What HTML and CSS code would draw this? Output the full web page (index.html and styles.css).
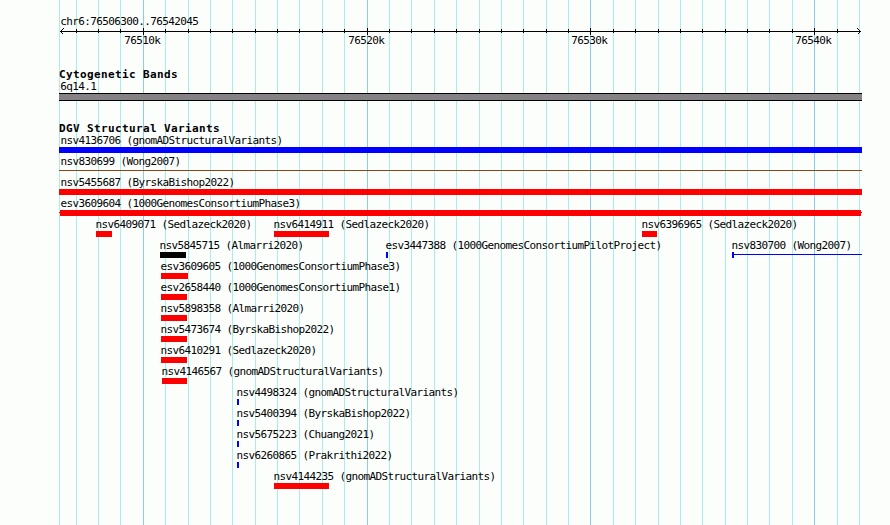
FILE: index.html
```html
<!DOCTYPE html>
<html lang="en">
<head>
<meta charset="utf-8">
<title>chr6:76506300..76542045</title>
<link rel="stylesheet" href="styles.css">
</head>
<body>
<svg class="gridlines" width="890" height="525" shape-rendering="crispEdges" aria-hidden="true">
<path class="minor" d="M59.5 0v525M76.5 0v525M98.5 0v525M120.5 0v525M165.5 0v525M188.5 0v525M210.5 0v525M232.5 0v525M255.5 0v525M277.5 0v525M299.5 0v525M322.5 0v525M344.5 0v525M389.5 0v525M411.5 0v525M434.5 0v525M456.5 0v525M479.5 0v525M501.5 0v525M523.5 0v525M546.5 0v525M568.5 0v525M613.5 0v525M635.5 0v525M658.5 0v525M680.5 0v525M702.5 0v525M725.5 0v525M747.5 0v525M769.5 0v525M792.5 0v525M837.5 0v525M859.5 0v525"/>
<path class="major" d="M143.5 0v525M367.5 0v525M590.5 0v525M814.5 0v525"/>
</svg>
<main class="browser">
<header class="ruler">
<div class="label region" style="--x:61px">chr6:76506300..76542045</div>
<svg class="axis" width="890" height="7" shape-rendering="crispEdges" aria-hidden="true">
<path d="M60 3.5H861M143.5 0v7M367.5 0v7M590.5 0v7M814.5 0v7M76.5 1v4M98.5 1v4M120.5 1v4M165.5 1v4M188.5 1v4M210.5 1v4M232.5 1v4M255.5 1v4M277.5 1v4M299.5 1v4M322.5 1v4M344.5 1v4M389.5 1v4M411.5 1v4M434.5 1v4M456.5 1v4M479.5 1v4M501.5 1v4M523.5 1v4M546.5 1v4M568.5 1v4M613.5 1v4M635.5 1v4M658.5 1v4M680.5 1v4M702.5 1v4M725.5 1v4M747.5 1v4M769.5 1v4M792.5 1v4M837.5 1v4"/>
<path d="M63.5 .5l-3 3l3 3M857.5 .5l3 3l-3 3"/>
</svg>
<div class="lane">
<span class="label" style="--x:125px">76510k</span>
<span class="label" style="--x:349px">76520k</span>
<span class="label" style="--x:572px">76530k</span>
<span class="label" style="--x:796px">76540k</span>
</div>
</header>
<section class="bands">
<h2>Cytogenetic Bands</h2>
<div class="label">6q14.1</div>
<div class="band"></div>
</section>
<section class="variants">
<h2>DGV Structural Variants</h2>
<div class="lane"><div class="feature" style="--x:61px"><span class="label">nsv4136706 (gnomADStructuralVariants)</span><i class="bar full gain"></i></div></div>
<div class="lane"><div class="feature" style="--x:61px"><span class="label">nsv830699 (Wong2007)</span><i class="bar full complex"></i></div></div>
<div class="lane"><div class="feature" style="--x:61px"><span class="label">nsv5455687 (ByrskaBishop2022)</span><i class="bar full"></i></div></div>
<div class="lane"><div class="feature" style="--x:61px"><span class="label">esv3609604 (1000GenomesConsortiumPhase3)</span><i class="bar full clipped"></i></div></div>
<div class="lane">
<div class="feature" style="--x:96px;--w:16px"><span class="label">nsv6409071 (Sedlazeck2020)</span><i class="bar"></i></div>
<div class="feature" style="--x:274px;--w:55px"><span class="label">nsv6414911 (Sedlazeck2020)</span><i class="bar"></i></div>
<div class="feature" style="--x:642px;--w:15px"><span class="label">nsv6396965 (Sedlazeck2020)</span><i class="bar"></i></div>
</div>
<div class="lane">
<div class="feature" style="--x:160px;--w:26px"><span class="label">nsv5845715 (Almarri2020)</span><i class="bar inversion"></i></div>
<div class="feature" style="--x:386px;--w:2px"><span class="label">esv3447388 (1000GenomesConsortiumPilotProject)</span><i class="bar gain"></i></div>
<div class="feature" style="--x:732px;--w:130px"><span class="label">nsv830700 (Wong2007)</span><i class="bar open"></i></div>
</div>
<div class="lane"><div class="feature" style="--x:161px;--w:27px"><span class="label">esv3609605 (1000GenomesConsortiumPhase3)</span><i class="bar"></i></div></div>
<div class="lane"><div class="feature" style="--x:161px;--w:26px"><span class="label">esv2658440 (1000GenomesConsortiumPhase1)</span><i class="bar"></i></div></div>
<div class="lane"><div class="feature" style="--x:161px;--w:26px"><span class="label">nsv5898358 (Almarri2020)</span><i class="bar"></i></div></div>
<div class="lane"><div class="feature" style="--x:161px;--w:26px"><span class="label">nsv5473674 (ByrskaBishop2022)</span><i class="bar"></i></div></div>
<div class="lane"><div class="feature" style="--x:161px;--w:26px"><span class="label">nsv6410291 (Sedlazeck2020)</span><i class="bar"></i></div></div>
<div class="lane"><div class="feature" style="--x:162px;--w:25px"><span class="label">nsv4146567 (gnomADStructuralVariants)</span><i class="bar"></i></div></div>
<div class="lane"><div class="feature" style="--x:237px;--w:2px"><span class="label">nsv4498324 (gnomADStructuralVariants)</span><i class="bar gain"></i></div></div>
<div class="lane"><div class="feature" style="--x:237px;--w:2px"><span class="label">nsv5400394 (ByrskaBishop2022)</span><i class="bar gain"></i></div></div>
<div class="lane"><div class="feature" style="--x:237px;--w:2px"><span class="label">nsv5675223 (Chuang2021)</span><i class="bar gain"></i></div></div>
<div class="lane"><div class="feature" style="--x:237px;--w:2px"><span class="label">nsv6260865 (Prakrithi2022)</span><i class="bar gain"></i></div></div>
<div class="lane"><div class="feature" style="--x:274px;--w:55px"><span class="label">nsv4144235 (gnomADStructuralVariants)</span><i class="bar"></i></div></div>
</section>
</main>
</body>
</html>
```
FILE: styles.css
```css
* { box-sizing: border-box; }
body {
  margin: 0;
  height: 525px;
  overflow: hidden;
  background: #fcfefc;
  color: #000;
  font-family: "DejaVu Sans Mono", monospace;
}
.gridlines { position: absolute; inset: 0; z-index: -1; fill: none; }
.minor { stroke: #a9eeeb; }
.major { stroke: #87ceeb; }
.browser { display: flex; flex-direction: column; width: 890px; }

.label {
  --x: 61px;
  display: block;
  height: 14px;
  margin-left: calc(var(--x) - 0.7px);
  font-size: 11px;
  line-height: 16px;
  letter-spacing: -0.622px;
  white-space: pre;
}
.lane { display: grid; grid-template-columns: 890px; }
.lane > * { grid-area: 1 / 1; }

.ruler { height: 67px; padding-top: 14px; }
.axis { display: block; fill: none; stroke: #000; }
.ruler .lane { margin-top: -2px; }

h2 {
  margin: 0 0 0 59px;
  height: 12px;
  font-size: 11px;
  line-height: 16px;
  font-weight: bold;
  letter-spacing: 0.378px;
  white-space: pre;
}
.bands { height: 54px; }
.band {
  width: 803px;
  height: 8px;
  margin: 0 0 0 59px;
  background: #848284;
  border: solid #000;
  border-width: 1px 0;
}

.variants .lane { height: 21px; }
.feature { padding-left: var(--x); }
.feature .label { margin-left: -0.5px; }
.bar {
  display: block;
  width: var(--w);
  height: 6px;
  background: #f00;
}
.full { width: 803px; margin-left: -2px; }
.gain { background: #00f; }
.inversion { background: #000; }
.complex { height: 1px; margin-top: 2px; background: #8b4513; }
.clipped {
  background:
    linear-gradient(#f00, #f00) 1px 0 / 801px 6px no-repeat,
    linear-gradient(#f00, #f00) 0 2px / 803px 1px no-repeat;
}
.open {
  background:
    linear-gradient(#00f, #00f) 0 0 / 2px 6px no-repeat,
    linear-gradient(#00f, #00f) 0 2px / 100% 1px no-repeat;
}
```
